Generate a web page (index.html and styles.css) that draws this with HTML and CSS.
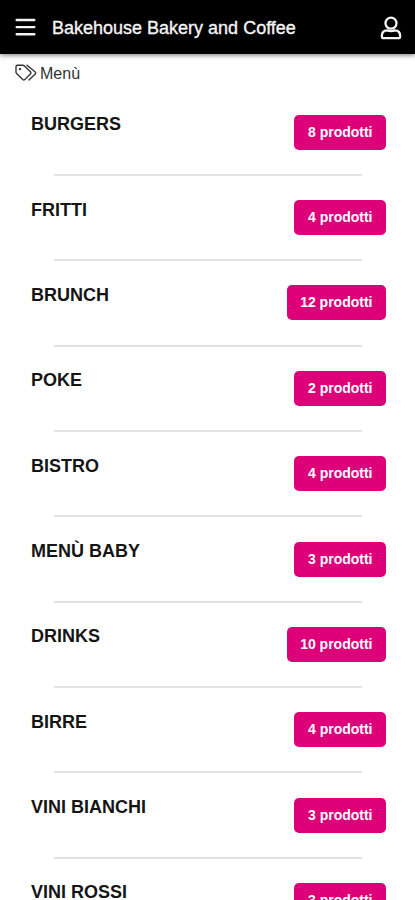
FILE: index.html
```html
<!DOCTYPE html>
<html lang="it">
<head>
<meta charset="utf-8">
<meta name="viewport" content="width=device-width, initial-scale=1">
<title>Bakehouse Bakery and Coffee</title>
<link rel="stylesheet" href="styles.css">
</head>
<body>
<header class="topbar">
  <svg class="burger" viewBox="0 0 20 18" aria-hidden="true"><path d="M1.2 2H18.8M1.2 9.1H18.8M1.2 16.2H18.8"/></svg>
  <h1 class="title">Bakehouse Bakery and Coffee</h1>
  <svg class="user" viewBox="0 0 22 24" aria-hidden="true"><circle cx="11" cy="7.2" r="5.5"/><path d="M7 14.3C3.8 14.5 1.9 16.8 1.9 19.6V20.4Q1.9 22.2 3.7 22.2H18.3Q20.1 22.2 20.1 20.4V19.6C20.1 16.8 18.2 14.5 15 14.3Q11 15.8 7 14.3Z"/></svg>
</header>
<div class="crumb">
  <svg class="tags" viewBox="0 0 22 18" aria-hidden="true"><path d="M1 2.6Q1 1.2 2.4 1.2H7.8Q8.6 1.2 9.2 1.8L15.4 7.8Q16.4 8.9 15.4 9.9L9.8 15.6Q8.8 16.5 7.8 15.6L1.6 9.6Q1 9 1 8.2ZM12 1.2L20 7.8Q21.2 8.9 20.2 10L14 16"/><circle cx="5" cy="5.1" r="1.2"/></svg>
  <span>Menù</span>
</div>
<main class="list">
  <section class="row"><h2>BURGERS</h2><a class="badge">8 prodotti</a></section>
  <section class="row"><h2>FRITTI</h2><a class="badge">4 prodotti</a></section>
  <section class="row"><h2>BRUNCH</h2><a class="badge">12 prodotti</a></section>
  <section class="row"><h2>POKE</h2><a class="badge">2 prodotti</a></section>
  <section class="row"><h2>BISTRO</h2><a class="badge">4 prodotti</a></section>
  <section class="row"><h2>MENÙ BABY</h2><a class="badge">3 prodotti</a></section>
  <section class="row"><h2>DRINKS</h2><a class="badge">10 prodotti</a></section>
  <section class="row"><h2>BIRRE</h2><a class="badge">4 prodotti</a></section>
  <section class="row"><h2>VINI BIANCHI</h2><a class="badge">3 prodotti</a></section>
  <section class="row"><h2>VINI ROSSI</h2><a class="badge">3 prodotti</a></section>
</main>
</body>
</html>
```
FILE: styles.css
```css
* { box-sizing: border-box; }
body {
  margin: 0;
  height: 900px;
  overflow: hidden;
  background: #fff;
  color: #151515;
  font-family: "Liberation Sans", Arial, sans-serif;
}
svg { fill: none; stroke-linecap: round; stroke-linejoin: round; flex: none; }
.topbar {
  display: flex;
  align-items: center;
  height: 54px;
  padding: 0 13px 0 15px;
  background: #000;
  color: #f4f4f4;
  box-shadow: 0 1px 5px rgba(0, 0, 0, .55);
}
.burger { width: 21px; height: 18px; stroke: #f4f4f4; stroke-width: 2.4; }
.title {
  margin: 2px 0 0 16px;
  flex: 1;
  font-size: 18px;
  font-weight: 400;
  line-height: 22px;
  white-space: nowrap;
  -webkit-text-stroke: .35px #f4f4f4;
}
.user { width: 22px; height: 24px; margin-top: 1px; stroke: #f4f4f4; stroke-width: 2.3; }
.crumb {
  display: flex;
  align-items: center;
  gap: 3px;
  height: 39px;
  padding-left: 15px;
  font-size: 16px;
  color: #333;
}
.tags { width: 22px; height: 18px; margin-top: -2px; stroke: #333; stroke-width: 1.35; }
.tags circle { fill: #333; stroke: none; }
.list { padding: 0 29px 0 31px; }
.row {
  position: relative;
  display: flex;
  justify-content: space-between;
  align-items: flex-start;
  height: 85.35px;
  padding-top: 21.4px;
}
.row::after {
  content: "";
  position: absolute;
  left: 23px;
  right: 24px;
  bottom: 2.5px;
  height: 2px;
  background: #e2e2e2;
}
.row h2 {
  margin: 0;
  font-size: 18px;
  line-height: 20px;
  font-weight: 700;
}
.badge {
  height: 35px;
  margin-top: .4px;
  padding: 0 13.5px;
  border-radius: 5px;
  background: #dd0078;
  color: #fff;
  font-size: 14px;
  font-weight: 700;
  line-height: 35px;
}
```
